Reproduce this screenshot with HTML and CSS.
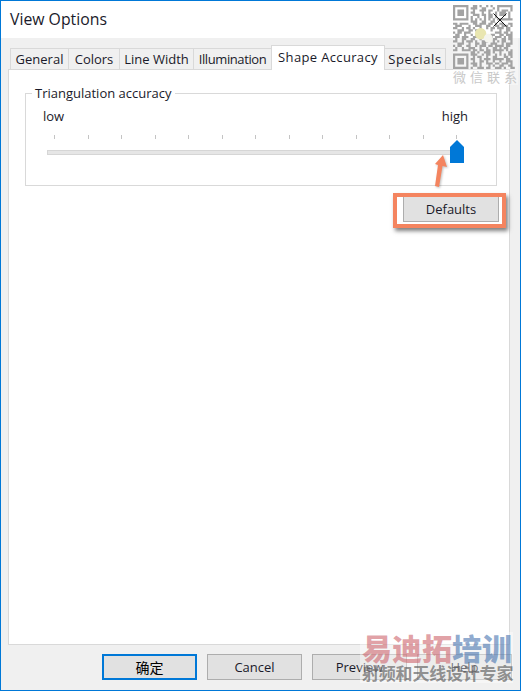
FILE: index.html
```html
<!DOCTYPE html>
<html lang="en">
<head>
    <meta charset="UTF-8">
    <meta name="viewport" content="width=device-width, initial-scale=1.0">
    <title>View Options</title>
    <link rel="stylesheet" href="styles.css">
</head>
<body>
    <div class="window">
        <div class="titlebar">
            <span class="title">View Options</span>
        </div>

        <div class="body">
            <div class="tabs">
                <div class="tab tab-general">General</div>
                <div class="tab tab-colors">Colors</div>
                <div class="tab tab-line">Line Width</div>
                <div class="tab tab-illum">Illumination</div>
                <div class="tab tab-active">Shape Accuracy</div>
                <div class="tab tab-specials">Specials</div>
            </div>

            <div class="panel">
                <div class="group">
                    <div class="group-title">Triangulation accuracy</div>
                    <div class="slider-labels">
                        <span>low</span>
                        <span>high</span>
                    </div>
                    <div class="ticks">
                        <i></i><i></i><i></i><i></i><i></i><i></i><i></i><i></i><i></i><i></i><i></i><i></i><i></i>
                    </div>
                    <div class="slider">
                        <div class="track"></div>
                        <svg class="thumb" width="14" height="23" viewBox="0 0 14 23">
                            <path d="M7 0 L14 7 V23 H0 V7 Z" fill="#0078d7"/>
                        </svg>
                    </div>
                </div>
                <div class="defaults-row">
                    <button class="btn btn-defaults">Defaults</button>
                </div>
            </div>

            <div class="footer">
                <button class="btn btn-ok">确定</button>
                <button class="btn">Cancel</button>
                <button class="btn">Preview</button>
                <button class="btn">Help</button>
            </div>
        </div>
    </div>

    <!-- annotation on top of the dialog -->
    <div class="callout"></div>
    <svg class="arrow" width="24" height="44" viewBox="0 0 24 44">
        <path d="M13 1 L17 13 L12.5 12 L9 33 L5 32 L8 11 L5 10 Z" fill="#f4845f"/>
    </svg>

    <!-- site watermarks -->
    <div class="qr-mark">
        <svg class="qr" width="64" height="64" viewBox="0 0 29 29">
            <path fill="none" stroke="#a3a3a3" stroke-width="1" d="
                M0 .5h7m2 0h2m1 0h1m2 0h1m1 0h1m2 0h7
                M0 1.5h1m5 0h1m1 0h3m2 0h2m3 0h1m1 0h1m5 0h1
                M0 2.5h1m1 0h3m1 0h1m2 0h1m2 0h3m1 0h2m2 0h1m1 0h3m1 0h1
                M0 3.5h1m1 0h3m1 0h1m1 0h2m3 0h1m2 0h1m2 0h1m1 0h3m1 0h1
                M0 4.5h1m1 0h3m1 0h1m2 0h3m1 0h2m1 0h2m1 0h1m1 0h3m1 0h1
                M0 5.5h1m5 0h1m1 0h1m2 0h1m2 0h1m1 0h2m1 0h1m5 0h1
                M0 6.5h7m1 0h1m1 0h1m1 0h1m1 0h1m1 0h1m1 0h1m1 0h7
                M8 7.5h3m2 0h2m2 0h2
                M0 8.5h2m1 0h4m2 0h2m1 0h3m1 0h2m1 0h1m1 0h2m2 0h2
                M1 9.5h3m3 0h1m2 0h3m2 0h2m2 0h2m1 0h3m1 0h1
                M0 10.5h2m2 0h1m1 0h2m1 0h1m2 0h1m2 0h1m1 0h2m1 0h3m1 0h2
                M2 11.5h3m2 0h2m1 0h4m3 0h1m3 0h1m2 0h2
                M0 12.5h1m1 0h2m1 0h3m5 0h1m5 0h3m1 0h2m1 0h1
                M1 13.5h2m2 0h1m2 0h1m1 0h1m6 0h2m2 0h2m1 0h3
                M0 14.5h3m1 0h3m2 0h2m6 0h1m1 0h3m1 0h1m1 0h2
                M1 15.5h1m2 0h2m2 0h2m2 0h1m5 0h2m2 0h2m1 0h2
                M0 16.5h2m2 0h1m1 0h3m1 0h1m2 0h3m2 0h1m1 0h1m1 0h2m2 0h1
                M2 17.5h3m2 0h1m2 0h2m1 0h2m2 0h3m2 0h1m1 0h3
                M0 18.5h1m1 0h2m2 0h2m2 0h1m1 0h3m1 0h2m1 0h4m1 0h2
                M1 19.5h1m2 0h1m2 0h3m2 0h1m2 0h1m2 0h2m1 0h1m1 0h2
                M0 20.5h2m2 0h4m1 0h2m1 0h2m1 0h2m1 0h5m1 0h1m1 0h1
                M8 21.5h2m1 0h1m2 0h3m1 0h1m2 0h1m3 0h2
                M0 22.5h7m1 0h3m2 0h1m1 0h2m2 0h1m1 0h1m1 0h1m1 0h2
                M0 23.5h1m5 0h1m2 0h1m1 0h2m2 0h1m2 0h2m3 0h2m1 0h1
                M0 24.5h1m1 0h3m1 0h1m1 0h2m2 0h1m1 0h3m1 0h5m1 0h2
                M0 25.5h1m1 0h3m1 0h1m2 0h1m2 0h2m1 0h1m2 0h1m2 0h1m2 0h3
                M0 26.5h1m1 0h3m1 0h1m1 0h3m1 0h1m2 0h3m1 0h2m1 0h3m1 0h1
                M0 27.5h1m5 0h1m2 0h2m1 0h1m3 0h1m1 0h1m2 0h2m2 0h2
                M0 28.5h7m1 0h1m2 0h3m1 0h2m2 0h3m1 0h1m2 0h2
            "/>
            <circle cx="12.5" cy="13" r="2.6" fill="#e9e6b0"/>
            <circle cx="16" cy="15" r="2" fill="#f4f4ee"/>
        </svg>
        <div class="qr-text">微信联系</div>
    </div>

    <svg class="close" width="14" height="14" viewBox="0 0 14 14">
        <path d="M.5 .5 L13.5 13.5 M13.5 .5 L.5 13.5" stroke="#111" stroke-width="1" fill="none"/>
    </svg>

    <div class="brand">
        <div class="brand-name"><span class="brand-red">易迪拓</span><span class="brand-blue">培训</span></div>
        <div class="brand-sub">射频和天线设计专家</div>
    </div>
</body>
</html>
```

FILE: styles.css
```css
* {
    margin: 0;
    padding: 0;
    box-sizing: border-box;
}

body {
    font-family: "Open Sans", "Noto Sans CJK SC", sans-serif;
    font-size: 13px;
    color: #1a1a2a;
    background: #f0f0f0;
    width: 521px;
    height: 691px;
    overflow: hidden;
    position: relative;
}

.window {
    width: 521px;
    height: 691px;
    border: 1px solid #0078d7;
    display: flex;
    flex-direction: column;
}

.titlebar {
    height: 37px;
    background: #fff;
    padding: 8px 0 0 9px;
    flex: none;
}

.title {
    font-size: 15.8px;
    line-height: 20px;
}

.body {
    flex: 1;
    background: #f0f0f0;
    display: flex;
    flex-direction: column;
}

.tabs {
    display: flex;
    align-items: flex-end;
    height: 31px;
    padding-left: 9px;
    flex: none;
}

.tab {
    height: 21px;
    line-height: 20px;
    text-align: center;
    white-space: nowrap;
    background: #f0f0f0;
    border: 1px solid #d9d9d9;
    border-bottom: none;
    border-left: none;
}

.tab-general { width: 59px; border-left: 1px solid #d9d9d9; }
.tab-colors { width: 51px; }
.tab-line { width: 74px; }
.tab-illum { width: 78px; letter-spacing: -0.4px; }
.tab-specials { width: 61px; letter-spacing: 0.6px; }

.tab-active {
    width: 114px;
    height: 25px;
    line-height: 22px;
    letter-spacing: 0.35px;
    margin-bottom: -1px;
    margin-left: -1px;
    background: #fff;
    border-left: 1px solid #d9d9d9;
    z-index: 1;
}

.panel {
    margin-left: 7px;
    width: 502px;
    height: 576px;
    background: #fff;
    border: 1px solid #d9d9d9;
    padding: 23px 12px 0 16px;
    flex: none;
}

.group {
    height: 93px;
    border: 1px solid #d9d9d9;
    padding: 0 17px 0 21px;
}

.group-title {
    width: fit-content;
    margin: -9px 0 0 -15px;
    padding: 0 3px;
    background: #fff;
    line-height: 17px;
}

.slider-labels {
    display: flex;
    justify-content: space-between;
    margin: 6px 11px 0 -4px;
    line-height: 17px;
}

.ticks {
    display: flex;
    justify-content: space-between;
    margin: 10px 20px 0 7px;
    height: 4px;
    width: 403px;
}

.ticks i {
    width: 1px;
    height: 4px;
    background: #c4c4c4;
}

.slider {
    position: relative;
    height: 24px;
    margin-top: 1px;
}

.track {
    position: absolute;
    left: 0;
    top: 10px;
    width: 405px;
    height: 5px;
    background: #e6e6e6;
    border: 1px solid #d6d6d6;
}

.thumb {
    position: absolute;
    left: 403px;
    top: 0;
}

.defaults-row {
    display: flex;
    justify-content: flex-end;
    margin: 9px -2px 0 0;
}

.btn {
    width: 95px;
    height: 26px;
    font-family: inherit;
    font-size: 13px;
    color: #1a1a2a;
    background: #e1e1e1;
    border: 1px solid #adadad;
}

.btn-defaults {
    height: 27px;
    width: 96px;
    padding-top: 1px;
}

.btn-ok {
    border: 2px solid #0078d7;
    color: #000;
    font-size: 14px;
}

.footer {
    display: flex;
    justify-content: flex-end;
    gap: 10px;
    padding: 9px 8px 0 0;
}

.callout {
    position: absolute;
    left: 393px;
    top: 193px;
    width: 113px;
    height: 35px;
    border: 4px solid #f4845f;
    box-shadow: 2px 3px 4px rgba(0, 0, 0, 0.5);
}

.arrow {
    position: absolute;
    left: 430px;
    top: 154px;
    filter: drop-shadow(1px 1px 1px rgba(0, 0, 0, 0.25));
}

.qr-mark {
    position: absolute;
    left: 453px;
    top: 5px;
    width: 65px;
    background: rgba(255, 255, 255, 0.35);
}

.qr {
    display: block;
    filter: blur(0.4px);
}

.qr-text {
    color: #c8c8c8;
    font-size: 13px;
    line-height: 16px;
    letter-spacing: 4px;
    white-space: nowrap;
}

.close {
    position: absolute;
    left: 493px;
    top: 13px;
}

.brand {
    position: absolute;
    left: 360px;
    top: 632px;
    width: 153px;
    height: 51px;
    background: rgba(255, 255, 255, 0.38);
    padding-left: 2px;
    font-family: "Noto Sans CJK SC", sans-serif;
    white-space: nowrap;
}

.brand-name {
    font-size: 30px;
    line-height: 30px;
    font-weight: 900;
}

.brand-red {
    color: rgba(205, 100, 108, 0.6);
}

.brand-blue {
    color: rgba(70, 115, 175, 0.6);
}

.brand-sub {
    font-size: 17px;
    line-height: 22px;
    letter-spacing: -0.2px;
    font-weight: 700;
    color: rgba(90, 90, 90, 0.65);
}
```
